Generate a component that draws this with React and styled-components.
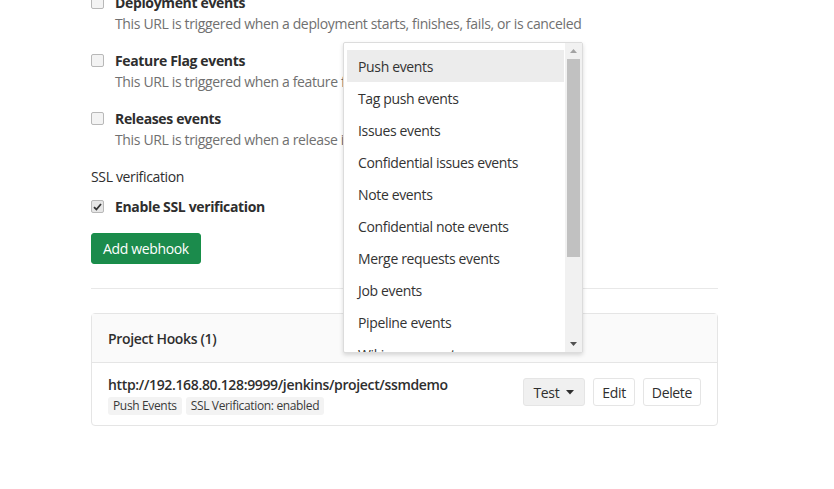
import React from "react";
import styled, { createGlobalStyle } from "styled-components";

const GlobalStyle = createGlobalStyle`
  body {
    margin: 0;
    background: #ffffff;
    font-family: "Open Sans", "Noto Sans", sans-serif;
    letter-spacing: -0.35px;
    color: #2e2e2e;
  }
  button {
    letter-spacing: inherit;
  }
`;

const events = [
  {
    name: "Deployment events",
    text: "This URL is triggered when a deployment starts, finishes, fails, or is canceled",
  },
  { name: "Feature Flag events", text: "This URL is triggered when a feature flag is toggled" },
  { name: "Releases events", text: "This URL is triggered when a release is updated" },
];

const options = [
  "Push events",
  "Tag push events",
  "Issues events",
  "Confidential issues events",
  "Note events",
  "Confidential note events",
  "Merge requests events",
  "Job events",
  "Pipeline events",
  "Wiki page events",
];

const App = () => {
  return (
    <Page>
      <GlobalStyle />
      <Content>
        {events.map((ev) => (
          <CheckRow key={ev.name}>
            <Box />
            <CheckText>
              <CheckLabel>{ev.name}</CheckLabel>
              <CheckHelp>{ev.text}</CheckHelp>
            </CheckText>
          </CheckRow>
        ))}
        <SectionLabel>SSL verification</SectionLabel>
        <SslRow>
          <Box $checked>
            <svg width="9" height="8" viewBox="0 0 9 8">
              <path d="M1 4.2 L3.4 6.5 L8 1" fill="none" stroke="#333" strokeWidth="1.8" />
            </svg>
          </Box>
          <CheckLabel>Enable SSL verification</CheckLabel>
        </SslRow>
        <SubmitButton>Add webhook</SubmitButton>
        <Divider />
        <Card>
          <CardHeader>Project Hooks (1)</CardHeader>
          <HookRow>
            <HookInfo>
              <HookUrl>http://192.168.80.128:9999/jenkins/project/ssmdemo</HookUrl>
              <Tags>
                <Tag>Push Events</Tag>
                <Tag>SSL Verification: enabled</Tag>
              </Tags>
            </HookInfo>
            <Actions>
              <Button $active>
                Test
                <svg width="8" height="5" viewBox="0 0 8 5">
                  <path d="M0 0 H8 L4 4.5 Z" fill="#2e2e2e" />
                </svg>
              </Button>
              <Button>Edit</Button>
              <Button>Delete</Button>
            </Actions>
          </HookRow>
        </Card>
        <Dropdown>
          <OptionList>
            {options.map((o, i) => (
              <Option key={o} $selected={i === 0}>
                {o}
              </Option>
            ))}
          </OptionList>
          <ScrollTrack>
            <Arrow viewBox="0 0 7 4">
              <path d="M0 4 L3.5 0 L7 4 Z" fill="#a3a3a3" />
            </Arrow>
            <Thumb />
            <Arrow viewBox="0 0 7 4">
              <path d="M0 0 L3.5 4 L7 0 Z" fill="#505050" />
            </Arrow>
          </ScrollTrack>
        </Dropdown>
      </Content>
    </Page>
  );
};

const Page = styled.div`
  width: 834px;
  height: 489px;
  overflow: hidden;
  background: #fff;
`;

const Content = styled.div`
  position: relative;
  width: 627px;
  margin-left: 91px;
  margin-top: -8px;
  display: flex;
  flex-direction: column;
`;

const CheckRow = styled.div`
  display: flex;
  gap: 11px;
  margin-bottom: 16px;
`;

const Box = styled.span`
  flex: none;
  width: 11px;
  height: 11px;
  margin-top: 4px;
  border: 1px solid #b8b8b8;
  border-radius: 2px;
  background: ${(p) => (p.$checked ? "#e6e6e6" : "#f3f3f3")};
  display: flex;
  align-items: center;
  justify-content: center;
`;

const CheckText = styled.div`
  display: flex;
  flex-direction: column;
`;

const CheckLabel = styled.div`
  font-size: 14px;
  font-weight: 700;
  line-height: 21px;
  color: #2e2e2e;
`;

const CheckHelp = styled.div`
  font-size: 14px;
  line-height: 21px;
  color: #707070;
`;

const SectionLabel = styled.div`
  font-size: 14px;
  line-height: 20px;
  color: #2e2e2e;
  margin: 1px 0 9px;
`;

const SslRow = styled.div`
  display: flex;
  gap: 11px;
  align-items: flex-start;
  margin-bottom: 16px;
`;

const SubmitButton = styled.button`
  align-self: flex-start;
  height: 31px;
  padding: 0 11px;
  border: 1px solid #168f48;
  border-radius: 3px;
  background: #1b8b4c;
  color: #fff;
  font-family: inherit;
  font-size: 14px;
`;

const Divider = styled.div`
  height: 1px;
  background: #e8e8e8;
  margin: 24px 0 24px;
`;

const Card = styled.div`
  border: 1px solid #e5e5e5;
  border-radius: 4px;
`;

const CardHeader = styled.div`
  height: 48px;
  display: flex;
  align-items: center;
  padding: 0 16px;
  background: #fafafa;
  border-bottom: 1px solid #e5e5e5;
  font-size: 14px;
  font-weight: 600;
  color: #2e2e2e;
`;

const HookRow = styled.div`
  display: flex;
  align-items: center;
  justify-content: space-between;
  padding: 12px 16px 10px;
`;

const HookInfo = styled.div`
  display: flex;
  flex-direction: column;
  gap: 2px;
`;

const HookUrl = styled.div`
  font-size: 14px;
  font-weight: 600;
  line-height: 20px;
  color: #2e2e2e;
`;

const Tags = styled.div`
  display: flex;
  gap: 4px;
`;

const Tag = styled.span`
  background: #f3f3f3;
  border-radius: 3px;
  padding: 1px 5px;
  font-size: 12px;
  line-height: 16px;
  color: #3a3a3a;
`;

const Actions = styled.div`
  display: flex;
  gap: 8px;
  margin-top: -6px;
`;

const Button = styled.button`
  height: 28px;
  padding: 0 ${(p) => (p.$active ? "10px" : "8px")};
  display: flex;
  align-items: center;
  gap: 7px;
  border: 1px solid #e5e5e5;
  border-radius: 3px;
  background: ${(p) => (p.$active ? "#f0f0f0" : "#fff")};
  color: #2e2e2e;
  font-family: inherit;
  font-size: 14px;
`;

const Dropdown = styled.div`
  position: absolute;
  left: 252px;
  top: 50px;
  width: 238px;
  height: 309px;
  display: flex;
  background: #fff;
  border: 1px solid #dcdcdc;
  border-radius: 2px;
  box-shadow: 0 2px 4px rgba(0, 0, 0, 0.15);
  overflow: hidden;
`;

const OptionList = styled.div`
  flex: 1;
  padding: 7px 1px 0 3px;
  overflow: hidden;
`;

const Option = styled.div`
  height: 32px;
  display: flex;
  align-items: center;
  padding-left: 11px;
  font-size: 14px;
  color: #333;
  white-space: nowrap;
  background: ${(p) => (p.$selected ? "#ececec" : "transparent")};
`;

const ScrollTrack = styled.div`
  flex: none;
  width: 17px;
  background: #f1f1f1;
  display: flex;
  flex-direction: column;
  align-items: center;
`;

const Arrow = styled.svg`
  flex: none;
  width: 7px;
  height: 4px;
  margin: 6px 0;
`;

const Thumb = styled.div`
  width: 13px;
  height: 198px;
  background: #c1c1c1;
  flex: none;
  margin-bottom: auto;
`;

export default App;
